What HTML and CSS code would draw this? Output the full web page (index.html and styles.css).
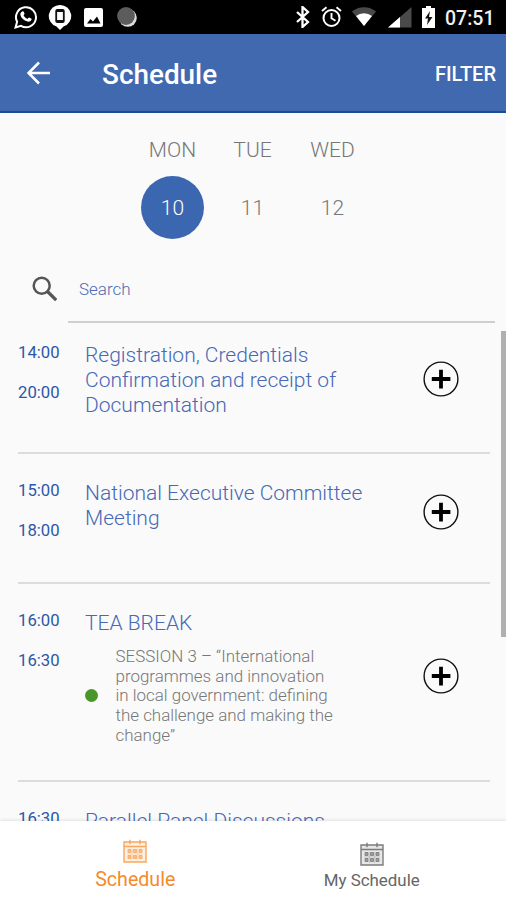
FILE: index.html
```html
<!DOCTYPE html>
<html lang="en">
<head>
<meta charset="utf-8">
<title>Schedule</title>
<link rel="stylesheet" href="styles.css">
</head>
<body>
<svg class="defs" aria-hidden="true">
  <symbol id="add" viewBox="0 0 36 36">
    <circle cx="18" cy="18" r="16.9" fill="none" stroke="#111" stroke-width="1.4"/>
    <path d="M18 8.8v18.6M8.8 18h18.6" stroke="#000" stroke-width="3.8"/>
  </symbol>
  <symbol id="calendar" viewBox="0 0 24 24">
    <path d="M1 3h22v20H1z" fill="currentColor" fill-opacity=".18"/>
    <path d="M1 3h22v20H1zM1 7.5h22M7 .8v4.4M17 .8v4.4" fill="none" stroke="currentColor" stroke-width="1.4"/>
    <path d="M5 10.5h3v3H5zM10.5 10.5h3v3h-3zM16 10.5h3v3h-3zM5 16.5h3v3H5zM10.5 16.5h3v3h-3zM16 16.5h3v3h-3z" fill="currentColor" fill-opacity=".7" stroke="currentColor" stroke-width=".8"/>
    <path d="M4 15h16M9.3 10v11M14.7 10v11" stroke="currentColor" stroke-opacity=".4" stroke-width=".8"/>
  </symbol>
</svg>
<div class="screen">
  <div class="status">
    <div class="status-left">
      <svg width="24" height="24" viewBox="0 0 24 24"><path d="M1.5 22.5l1.6-5.7A10 10 0 1 1 7 20.9z" fill="none" stroke="#fff" stroke-width="2"/><path d="M8.5 6.3c.6-.4 1.1 0 1.3.6l.7 1.7c.2.6-.8 1.3-.9 1.7.8 1.7 2.2 2.9 3.9 3.6.5-.2 1.1-1.4 1.6-1.3l2.1 1c.5.3.5.6.3 1.2-.6 1.6-2.4 2.2-4 1.8-3.7-1-6.4-3.6-7.1-6.6-.3-1.5.5-3 2.1-3.7z" fill="#fff"/></svg>
      <svg width="24" height="26" viewBox="0 0 24 26"><path d="M12 1a11 11 0 0 1 3.5 21.5L12 26l-3.5-3.5A11 11 0 0 1 12 1z" fill="#fff"/><rect x="8.2" y="6" width="7.6" height="12" rx="1" fill="#fff" stroke="#111" stroke-width="1.8"/><path d="M8 7h8M8 17h8" stroke="#111" stroke-width="2"/></svg>
      <svg width="19" height="19" viewBox="0 0 19 19"><rect width="19" height="19" rx="2" fill="#fff"/><path d="M3 15.5l3.5-4.5 2.5 2.5 4-5 3.5 7z" fill="#000"/></svg>
      <svg width="20" height="20" viewBox="0 0 20 20"><circle cx="10.8" cy="10.8" r="9" fill="#ddd"/><circle cx="9" cy="9" r="8.9" fill="#5c5c5c"/></svg>
    </div>
    <div class="status-right">
      <svg width="14" height="22" viewBox="0 0 14 22"><path d="M1 6l11 10-5.5 5V1L12 6 1 16" fill="none" stroke="#fff" stroke-width="2.3"/></svg>
      <svg class="alarm" width="21" height="22" viewBox="0 0 21 22"><circle cx="10.5" cy="12" r="8" fill="none" stroke="#fff" stroke-width="2"/><path d="M10.5 7v5.3l4 2.5M1 5l4.5-3.7M20 5l-4.5-3.7" fill="none" stroke="#fff" stroke-width="1.9"/></svg>
      <svg class="wifi" width="24" height="20" viewBox="0 0 24 20"><path d="M0 4.5a19 19 0 0 1 24 0L12 19z" fill="#4a4a4a"/><path d="M4 9a13 13 0 0 1 16 0l-8 10z" fill="#fff"/></svg>
      <svg class="signal" width="24" height="21" viewBox="0 0 24 21"><path d="M23.5 0v20.5H0z" fill="#4a4a4a"/><path d="M12 10v10.5H0z" fill="#fff"/></svg>
      <svg class="battery" width="13" height="22" viewBox="0 0 13 22"><path d="M4 0h5v2h4v20H0V2h4z" fill="#fff"/><path d="M8 5l-5 7.5h3L5 19l5.5-8H7z" fill="#111"/></svg>
      <span class="clock">07:51</span>
    </div>
  </div>
  <header class="appbar">
    <svg width="24" height="24" viewBox="0 0 24 24"><path d="M23 12H2M12 1.5L1.5 12 12 22.5" fill="none" stroke="#fff" stroke-width="2.5"/></svg>
    <h1>Schedule</h1>
    <span class="filter">FILTER</span>
  </header>
  <main class="content">
    <div class="days">
      <div class="day"><span>MON</span><b class="date active">10</b></div>
      <div class="day"><span>TUE</span><b class="date">11</b></div>
      <div class="day"><span>WED</span><b class="date">12</b></div>
    </div>
    <div class="search">
      <svg width="26" height="26" viewBox="0 0 26 26"><circle cx="9.7" cy="9.7" r="8" fill="none" stroke="#555" stroke-width="2.5"/><path d="M15.5 15.5l8.7 8.7" stroke="#555" stroke-width="3.2"/></svg>
      <div class="field">Search</div>
    </div>
    <div class="list">
      <section class="row first">
        <div class="times"><span>14:00</span><span>20:00</span></div>
        <div class="info"><h2>Registration, Credentials<br>Confirmation and receipt of<br>Documentation</h2></div>
        <svg class="add"><use href="#add"/></svg>
      </section>
      <section class="row second">
        <div class="times"><span>15:00</span><span>18:00</span></div>
        <div class="info"><h2>National Executive Committee<br>Meeting</h2></div>
        <svg class="add"><use href="#add"/></svg>
      </section>
      <section class="row third">
        <div class="times"><span>16:00</span><span>16:30</span></div>
        <div class="info"><h2>TEA BREAK</h2>
          <div class="session"><i class="dot"></i><p>SESSION 3 – “International<br>programmes and innovation<br>in local government: defining<br>the challenge and making the<br>change”</p></div>
        </div>
        <svg class="add"><use href="#add"/></svg>
      </section>
      <section class="row">
        <div class="times"><span>16:30</span></div>
        <div class="info"><h2>Parallel Panel Discussions</h2></div>
      </section>
    </div>
    <div class="scrollbar"></div>
  </main>
  <nav class="tabs">
    <div class="tab selected"><svg><use href="#calendar"/></svg><span>Schedule</span></div>
    <div class="tab"><svg><use href="#calendar"/></svg><span>My Schedule</span></div>
  </nav>
</div>
</body>
</html>
```

FILE: styles.css
```css
* { box-sizing: border-box; margin: 0; }
body { font-family: Roboto, "Liberation Sans", sans-serif; background: #fafafa; }
svg { display: block; flex: none; }
.defs { position: absolute; width: 0; height: 0; }
.screen { width: 506px; height: 900px; display: flex; flex-direction: column; overflow: hidden; }

.status { height: 34px; flex: none; background: #000; display: flex; justify-content: space-between; padding: 0 10px 0 14px; }
.status-left, .status-right { display: flex; align-items: center; }
.status-left { gap: 10px; }
.status-left svg:nth-child(3) { margin-left: 2px; }
.status-left svg:nth-child(4) { margin-left: 4px; }
.alarm { margin-left: 11px; }
.wifi { margin-left: 10px; }
.signal { margin-left: 12px; }
.battery { margin-left: 10px; }
.clock { margin-left: 10px; width: 51px; color: #f0f0f0; font-size: 19.5px; font-weight: 500; line-height: 32px; padding-top: 3px; white-space: nowrap; }

.appbar { height: 79px; flex: none; background: #4169b0; border-bottom: 2px solid #1e4c94; display: flex; align-items: center; padding: 4px 10px 0 27px; color: #fff; }
.appbar svg { margin-bottom: 4px; }
.appbar h1 { margin-left: 51px; font-size: 27.9px; font-weight: 500; line-height: 32px; }
.filter { margin-left: auto; font-size: 20px; font-weight: 500; margin-bottom: 1px; }

.content { flex: 1; min-height: 0; overflow: hidden; position: relative; }
.days { display: flex; margin-left: 132.5px; padding-top: 24px; height: 145px; }
.day { width: 80px; display: flex; flex-direction: column; align-items: center; color: #777; font-size: 21px; font-weight: 300; line-height: 26px; }
.date { width: 63px; height: 63px; margin-top: 13px; border-radius: 50%; line-height: 64px; text-align: center; font-weight: 300; }
.active { background: #3b67b1; color: #fff; }

.search { display: flex; height: 65px; padding: 18px 11px 0 32px; }
.field { flex: 1; margin-left: 10px; padding: 2px 0 0 11px; border-bottom: 2px solid #cfcfcf; color: #4c6cb3; font-size: 17px; font-weight: 300; line-height: 22px; }

.list { margin: 0 16px 0 18px; }
.row { display: flex; border-bottom: 2px solid #dcdcdc; padding-top: 26px; }
.first { height: 131px; padding-top: 19px; }
.second { height: 130px; }
.third { height: 198px; }
.times { width: 67px; flex: none; display: flex; flex-direction: column; gap: 19.6px; padding-top: 1px; color: #2c57a8; font-size: 16.7px; line-height: 20px; }
.info { flex: 1; padding-top: 1px; }
h2 { color: #4668b5; font-size: 21px; font-weight: 300; line-height: 24.8px; white-space: nowrap; }
.session { display: flex; align-items: center; margin-top: 11px; }
.dot { width: 13px; height: 13px; flex: none; border-radius: 50%; background: #4b962b; margin-bottom: 2px; }
.session p { margin-left: 17.5px; color: #777; font-size: 16.95px; font-weight: 300; line-height: 19.8px; white-space: nowrap; }
.add { width: 36px; height: 36px; margin-right: 31px; margin-top: 18.5px; }
.second .add { margin-top: 14px; }
.third .add { margin-top: 48px; }
.scrollbar { position: absolute; right: 0; top: 218px; width: 5px; height: 306px; background: #b0b0b0; }

.tabs { height: 79px; flex: none; display: flex; background: #fff; padding: 0 16px 0 17px; box-shadow: 0 -1px 3px rgba(0, 0, 0, .1); z-index: 1; }
.tab { flex: 1; display: flex; flex-direction: column; align-items: center; padding-top: 21px; color: #666; font-size: 16.9px; line-height: 20px; }
.tab svg { width: 24px; height: 24px; opacity: .85; }
.tab span { margin-top: 4px; }
.selected { padding-top: 18px; color: #f58a2b; font-size: 19.6px; line-height: 24px; }
.selected svg { opacity: .75; }
.selected span { margin-top: 5px; }
```
